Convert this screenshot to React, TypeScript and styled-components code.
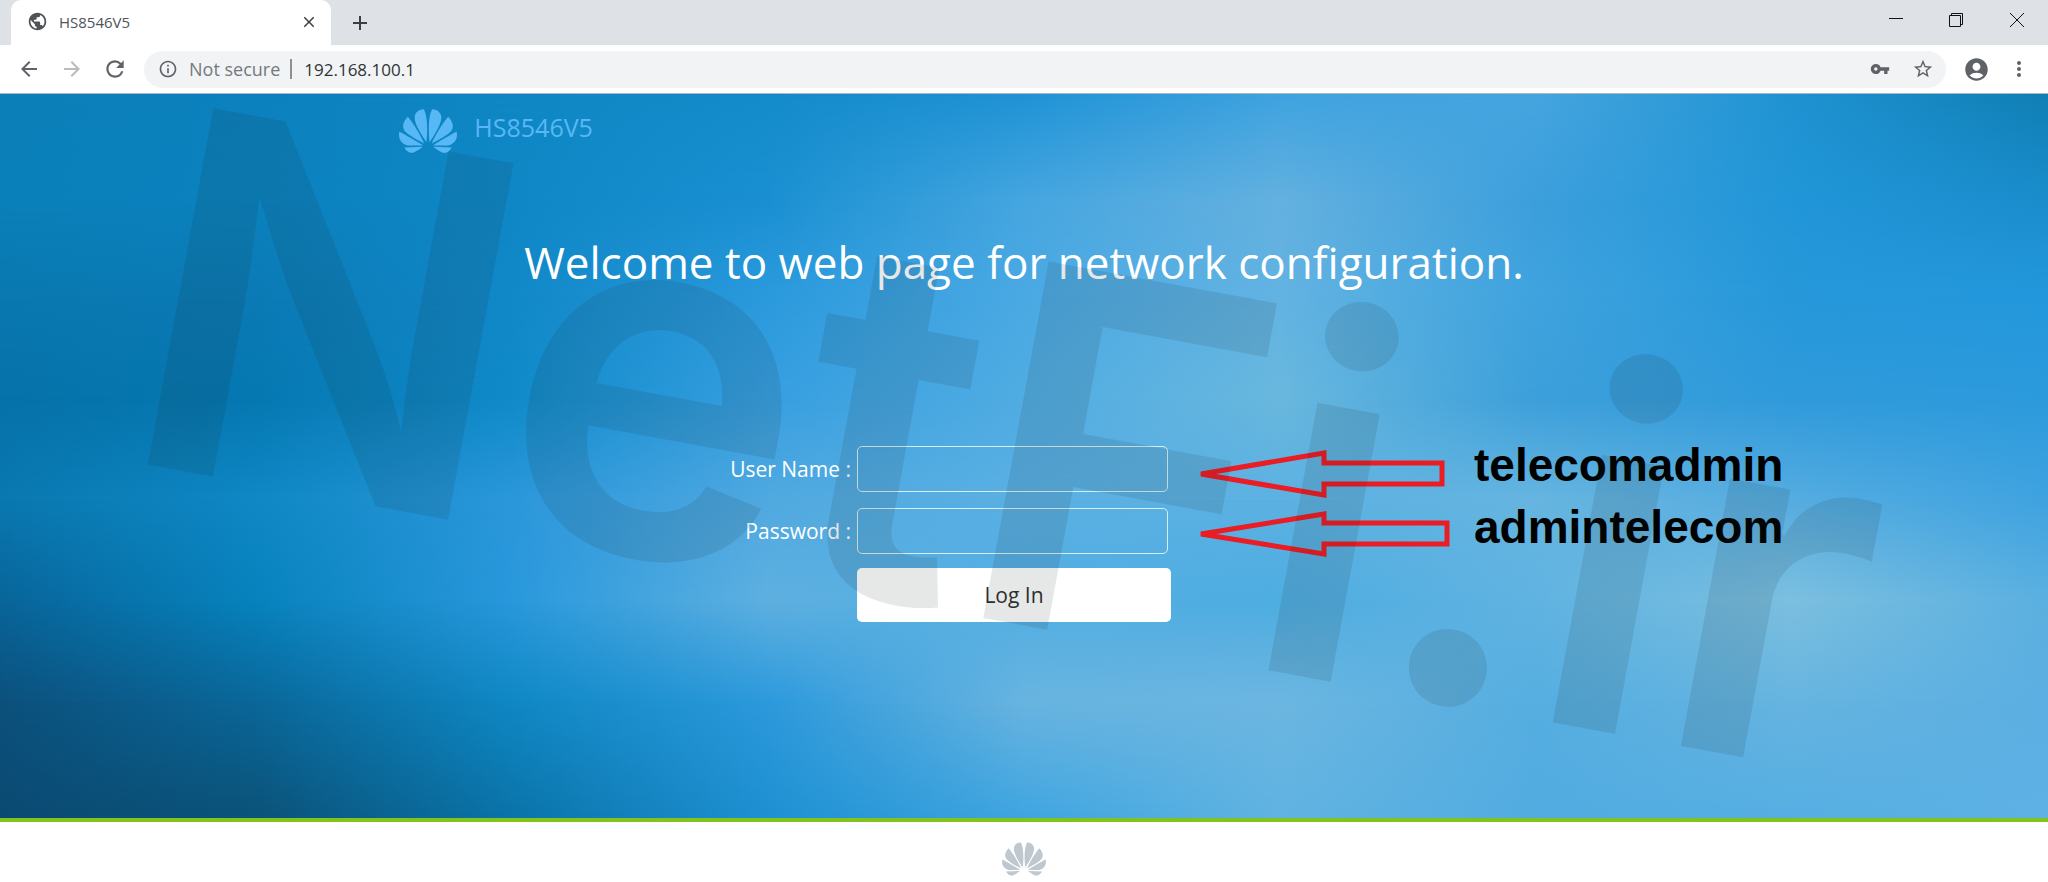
import React from "react";
import styled, { createGlobalStyle } from "styled-components";
import {
  MdAccountCircle,
  MdAdd,
  MdArrowBack,
  MdArrowForward,
  MdClose,
  MdInfoOutline,
  MdMoreVert,
  MdPublic,
  MdRefresh,
  MdStarBorder,
  MdVpnKey,
} from "react-icons/md";
import { SiHuawei } from "react-icons/si";

const GlobalStyle = createGlobalStyle`
  * { box-sizing: border-box; }
  html, body, #root { height: 100%; }
  body {
    margin: 0;
    background: #fff;
    font-family: "Open Sans", "Noto Sans", sans-serif;
  }
  button, input { font-family: inherit; }
`;

const Window = styled.div`
  min-height: 100%;
  display: flex;
  flex-direction: column;
`;

/* Browser frame */

const TabStrip = styled.header`
  display: flex;
  height: 45px;
  padding-left: 11px;
  background: #dee1e6;
  color: #45494d;
`;

const Tab = styled.div`
  display: flex;
  align-items: center;
  width: 320px;
  padding: 0 12px 2px 16px;
  background: #fff;
  border-radius: 10px 10px 0 0;
  font-size: 15px;
  color: #505459;
`;

const TabTitle = styled.span`
  flex: 1;
  margin-left: 11px;
`;

const IconButton = styled.button<{ $width?: number; $color?: string }>`
  display: flex;
  align-items: center;
  justify-content: center;
  width: ${(p) => p.$width ?? 20}px;
  height: 100%;
  padding: 0;
  border: 0;
  background: none;
  color: ${(p) => p.$color ?? "#5f6368"};
`;

const WindowControls = styled.div`
  display: flex;
  margin-left: auto;
  padding-bottom: 6px;
`;

const Toolbar = styled.div`
  display: flex;
  align-items: center;
  height: 49px;
  padding: 0 8px 0 7px;
  border-bottom: 1px solid #a9b7c0;
  background: #fff;
`;

const AddressBar = styled.div`
  display: flex;
  align-items: center;
  flex: 1;
  height: 37px;
  margin: 0 9px 0 8px;
  padding: 0 2px 0 14px;
  border-radius: 19px;
  background: #f1f3f4;
  color: #5f6368;
  font-size: 18px;
`;

const SecurityLabel = styled.span`
  margin-left: 11px;
  padding-right: 10px;
  border-right: 2px solid #8d9195;
  line-height: 20px;
  color: #75797d;
`;

const AddressInput = styled.input`
  flex: 1;
  min-width: 0;
  padding: 0 12px;
  border: 0;
  outline: 0;
  background: none;
  font-size: 17px;
  color: #303337;
`;

/* Login page */

const Hero = styled.main`
  position: relative;
  flex: 1;
  padding-bottom: 196px;
  border-bottom: 4px solid #82c41c;
  overflow: hidden;
`;

const Band = styled.div<{ $colors: string[]; $from: number; $to: number }>`
  position: absolute;
  inset: 0;
  background: linear-gradient(to right, ${(p) => p.$colors.join(", ")});
  mask-image: linear-gradient(
    to bottom,
    ${(p) => (p.$to === 0 ? "#000" : "transparent")} ${(p) => p.$from}%,
    #000 ${(p) => p.$to}%
  );
`;

const Content = styled.div`
  position: relative;
`;

const Brand = styled.div`
  display: flex;
  gap: 17px;
  width: 61%;
  margin: 0 auto;
  padding-top: 8px;
  color: #57b8f5;
  font-size: 25px;
  line-height: 50px;
`;

const Title = styled.h1`
  margin: 62px 0 0;
  text-align: center;
  font-size: 44px;
  line-height: 80px;
  font-weight: 400;
  color: #fff;
`;

const LoginForm = styled.form`
  display: grid;
  grid-template-columns: minmax(0, 1fr) 314px minmax(0, 1fr);
  gap: 16px 6px;
  margin-top: 144px;
  padding-right: 20px;
`;

const Label = styled.label`
  text-align: right;
  font-size: 21px;
  line-height: 46px;
  color: #fff;
`;

const Field = styled.input`
  width: 311px;
  height: 46px;
  padding: 0 12px;
  border: 1px solid #d9eef0;
  border-radius: 5px;
  outline: 0;
  background: transparent;
  color: #fff;
  font-size: 21px;
`;

const LoginButton = styled.button`
  grid-column: 2;
  height: 54px;
  margin-top: -2px;
  border: 0;
  border-radius: 5px;
  background: #fff;
  color: #303030;
  font-size: 21px;
`;

const Note = styled.div`
  display: flex;
  align-items: flex-start;
  gap: 28px;
  height: 46px;
  padding-left: 20px;
  font: bold 46px/38px "Liberation Sans", Arial, sans-serif;
  white-space: nowrap;
  color: #000;
`;

const Arrow = styled.svg`
  flex: none;
  overflow: visible;
  fill: none;
  stroke: #ea1c24;
  stroke-width: 5;
`;

const Watermark = styled.svg`
  position: absolute;
  inset: 0;
  width: 100%;
  height: 100%;
  pointer-events: none;
  font-family: Inter, sans-serif;
  font-weight: 600;
  font-size: 498px;
  fill: rgba(30, 32, 36, 0.11);
`;

const Footer = styled.footer`
  display: flex;
  align-items: center;
  justify-content: center;
  height: 60px;
  padding-top: 14px;
  color: #bfc7cf;
`;

const sky = [
  ["#0b7fb8", "#0c82be", "#0f87c4", "#148bca", "#1f93d6", "#3fa3e0", "#45a5df", "#1f93d2", "#107fb4"],
  ["#0a80b9", "#0b82be", "#0f87c6", "#1a90d2", "#46a6e0", "#64b1df", "#3c9fdc", "#2196d8", "#1a8dcd"],
  ["#0a78b0", "#0b7ab5", "#1188c8", "#2b9add", "#4aa9e3", "#62b3e2", "#3fa3de", "#2698da", "#2398dc"],
  ["#0672a9", "#0578b1", "#108ac9", "#379fe0", "#50ace2", "#69b8de", "#3c9fda", "#2f9adb", "#2c9adc"],
  ["#0a78b0", "#0f88c5", "#2b97db", "#50a9e0", "#5ab0e3", "#5cb1e2", "#66b5e0", "#55ace0", "#3fa3e0"],
  ["#08659a", "#0782bd", "#2998dc", "#5eb0e0", "#52aee2", "#4eade1", "#60b3e1", "#7cbfdf", "#5ab0e0"],
  ["#0c507c", "#0a6799", "#0f88c4", "#2c99dc", "#68b4e0", "#6cb6e1", "#55aee0", "#66b4e0", "#5bafe2"],
  ["#0a4a72", "#0b5278", "#0a73a8", "#1e90d2", "#3fa5e0", "#60b3e1", "#52abe0", "#55aee2", "#5eb1e4"],
];
const skyStops = [0, 15, 28, 42, 56, 70, 84, 100];

export default function App() {
  return (
    <>
      <GlobalStyle />
      <Window>
        <TabStrip>
          <Tab>
            <MdPublic size={21} />
            <TabTitle>HS8546V5</TabTitle>
            <IconButton aria-label="Close tab" $color="#3c4043">
              <MdClose size={18} />
            </IconButton>
          </Tab>
          <IconButton aria-label="New tab" $width={58} $color="#3c4043">
            <MdAdd size={24} />
          </IconButton>
          <WindowControls>
            <IconButton aria-label="Minimize" $width={60} $color="#111">
              <svg width="14" height="14" fill="none" stroke="currentColor">
                <path d="M0 5.5h14" />
              </svg>
            </IconButton>
            <IconButton aria-label="Restore" $width={60} $color="#111">
              <svg width="14" height="14" fill="none" stroke="currentColor">
                <path d="M.5 2.5h11v11H.5zM2.500 2.500v-2h11v11h-2" />
              </svg>
            </IconButton>
            <IconButton aria-label="Close" $width={62} $color="#111">
              <svg width="14" height="14" fill="none" stroke="currentColor">
                <path d="M0 0l14 14M14 0L0 14" />
              </svg>
            </IconButton>
          </WindowControls>
        </TabStrip>

        <Toolbar>
          <IconButton aria-label="Back" $width={43}>
            <MdArrowBack size={24} />
          </IconButton>
          <IconButton aria-label="Forward" $width={43} $color="#b9bbbe">
            <MdArrowForward size={24} />
          </IconButton>
          <IconButton aria-label="Reload" $width={43}>
            <MdRefresh size={26} />
          </IconButton>
          <AddressBar>
            <MdInfoOutline size={20} />
            <SecurityLabel>Not secure</SecurityLabel>
            <AddressInput aria-label="Address" defaultValue="192.168.100.1" />
            <IconButton aria-label="Saved passwords" $width={43}>
              <MdVpnKey size={20} />
            </IconButton>
            <IconButton aria-label="Bookmark this page" $width={43}>
              <MdStarBorder size={22} />
            </IconButton>
          </AddressBar>
          <IconButton aria-label="Profile" $width={42}>
            <MdAccountCircle size={27} />
          </IconButton>
          <IconButton aria-label="Menu" $width={43}>
            <MdMoreVert size={24} />
          </IconButton>
        </Toolbar>

        <Hero>
          {sky.map((colors, i) => (
            <Band
              key={i}
              aria-hidden
              $colors={colors}
              $from={i === 0 ? 0 : skyStops[i - 1]}
              $to={skyStops[i]}
            />
          ))}
          <Content>
            <Brand>
              <SiHuawei size={58} aria-label="Huawei" />
              <span>HS8546V5</span>
            </Brand>
            <Title>Welcome to web page for network configuration.</Title>
            <LoginForm onSubmit={(e) => e.preventDefault()}>
              <Label htmlFor="user">User Name :</Label>
              <Field id="user" type="text" />
              <Note>
                <Arrow width="249" height="46" aria-hidden>
                  <path d="M4 28L127 7V17H245V38H127V49Z" />
                </Arrow>
                <span>telecomadmin</span>
              </Note>
              <Label htmlFor="password">Password :</Label>
              <Field id="password" type="password" />
              <Note>
                <Arrow width="249" height="46" aria-hidden>
                  <path d="M4 26L127 6V15H250V36H127V46Z" />
                </Arrow>
                <span>admintelecom</span>
              </Note>
              <LoginButton type="submit">Log In</LoginButton>
            </LoginForm>
          </Content>
          <Watermark viewBox="0 0 2048 724" preserveAspectRatio="xMidYMid slice">
            <text transform="translate(112 364) rotate(10.4)">NetFi.ir</text>
          </Watermark>
        </Hero>

        <Footer>
          <SiHuawei size={44} aria-label="Huawei" />
        </Footer>
      </Window>
    </>
  );
}
